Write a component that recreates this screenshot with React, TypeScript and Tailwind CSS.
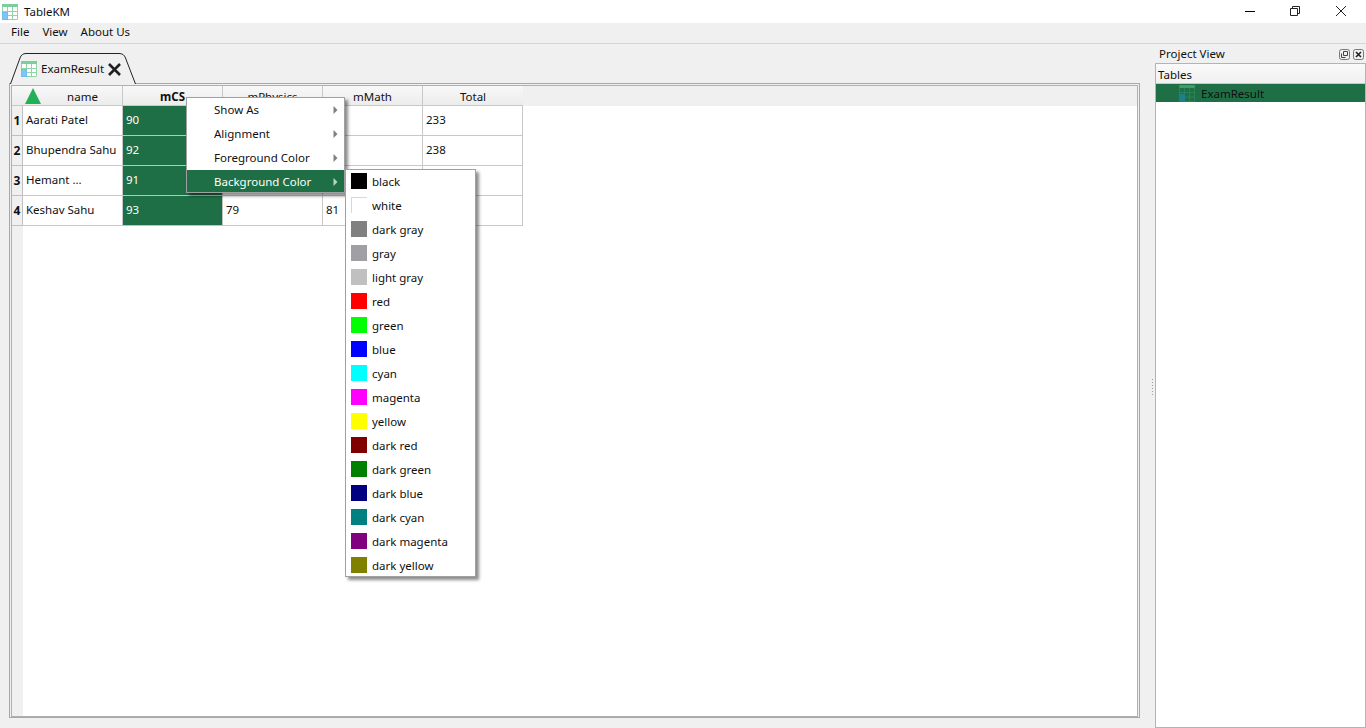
import React from "react";

const TableIcon = ({ className = "" }: { className?: string }) => (
  <svg viewBox="0 0 16 16" width="16" height="16" className={className}>
    <rect x="0" y="0" width="16" height="16" fill="#ffffff" />
    <rect x="0" y="0" width="16" height="3" fill="#7ccf9b" />
    <path d="M0.5 3V15.5H15.5V3M0 7.5H16M0 11.5H16M5.5 3V16M10.5 3V16" stroke="#8ed6a8" strokeWidth="1" fill="none" />
    <rect x="0" y="8" width="6" height="8" fill="#62b8ee" />
    <path d="M2 8V16M4 8V16M0 10H6M0 12H6M0 14H6" stroke="#9bd4f5" strokeWidth="0.6" />
  </svg>
);

const SelectedIcon = () => (
  <svg viewBox="0 0 16 18" width="16" height="18">
    <rect x="0" y="0" width="16" height="18" rx="1" fill="#1e6f45" />
    <rect x="0" y="1" width="16" height="3" rx="1" fill="#3f9d6c" />
    <path d="M0.5 4V17.5H15.5V4M0 8.5H16M0 13H16M5.5 4V18M10.5 4V18" stroke="#2b8257" strokeWidth="1" fill="none" />
    <rect x="0" y="10" width="6" height="8" fill="#1c7f8f" />
  </svg>
);

const Arrow = ({ active = false }: { active?: boolean }) => (
  <svg width="5" height="8" viewBox="0 0 5 8">
    <path d="M0.5 0L4.5 4L0.5 8Z" fill={active ? "#b9d4c6" : "#808080"} />
  </svg>
);

const cols = ["mCS", "mPhysics", "mMath", "Total"];
const rows = [
  ["Aarati Patel", "90", "71", "72", "233"],
  ["Bhupendra Sahu", "92", "73", "73", "238"],
  ["Hemant ...", "91", "70", "74", "235"],
  ["Keshav Sahu", "93", "79", "81", "253"],
];

const colors: [string, string][] = [
  ["black", "#000000"],
  ["white", "#ffffff"],
  ["dark gray", "#808080"],
  ["gray", "#a0a0a4"],
  ["light gray", "#c0c0c0"],
  ["red", "#ff0000"],
  ["green", "#00ff00"],
  ["blue", "#0000ff"],
  ["cyan", "#00ffff"],
  ["magenta", "#ff00ff"],
  ["yellow", "#ffff00"],
  ["dark red", "#800000"],
  ["dark green", "#008000"],
  ["dark blue", "#000080"],
  ["dark cyan", "#008080"],
  ["dark magenta", "#800080"],
  ["dark yellow", "#808000"],
];

const menu = ["Show As", "Alignment", "Foreground Color", "Background Color"];

export default function App() {
  return (
    <div className="relative flex h-[728px] w-[1366px] flex-col overflow-hidden bg-[#f0f0f0] font-['Noto_Sans','Open_Sans',sans-serif] text-[11.5px] text-[#101010]">
      {/* title bar */}
      <div className="flex h-[23px] items-center bg-white">
        <TableIcon className="ml-[2px]" />
        <span className="ml-[6px] flex-1 leading-[23px]">TableKM</span>
        <div className="mr-[19px] flex items-center gap-[33px] pb-[2px]">
          <svg width="12" height="12" viewBox="0 0 12 12"><path d="M1 6.5H11" stroke="#000" /></svg>
          <svg width="12" height="12" viewBox="0 0 12 12" fill="none"><path d="M1.5 3.5H8.5V10.5H1.5ZM3.5 3.5V1.5H10.5V8.5H8.5" stroke="#222" /></svg>
          <svg className="ml-px" width="12" height="12" viewBox="0 0 12 12" fill="none"><path d="M1 1L11 11M11 1L1 11" stroke="#222" /></svg>
        </div>
      </div>
      {/* menu bar */}
      <div className="flex h-[20px] items-center gap-[13px] pl-[11px] pb-[2px]">
        <span>File</span>
        <span>View</span>
        <span>About Us</span>
      </div>
      <div className="h-px bg-[#d4d4d4]" />
      {/* main */}
      <div className="flex flex-1">
        {/* tab area */}
        <div className="flex w-[1155px] flex-col pl-[9px] pr-[15px] pt-[9px] pb-[10px]">
          <div className="relative z-10 -mb-px ml-px flex h-[31px] w-[126px] items-center pl-[11px]">
            <svg className="absolute left-0 top-0" width="126" height="31" viewBox="0 0 126 31" fill="none">
              <path d="M0.5 31L10 5Q11.5 0.5 16 0.5H109Q114 0.5 115.5 5L125.5 31" fill="#f0f0f0" stroke="#222" />
            </svg>
            <TableIcon className="relative" />
            <span className="relative ml-[4px] w-[64px] pt-px">ExamResult</span>
            <svg className="relative ml-[3px] mt-px" width="13" height="13" viewBox="0 0 13 13">
              <path d="M1 1L12 12M12 1L1 12" stroke="#202020" strokeWidth="2.6" />
            </svg>
          </div>
          <div className="flex flex-1 flex-col border border-[#a8a8a8] pl-px pt-px pr-px">
            <div className="flex flex-1 flex-col border border-[#b0b0b0] bg-white">
              {/* header */}
              <div className="flex h-[20px]">
                <div className="flex h-[20px] w-[111px] items-center border-r border-b border-[#c8c8c8] bg-gradient-to-b from-[#f8f8f8] to-[#ececec] pl-[13px]">
                  <svg width="16" height="16" viewBox="0 0 16 16" className="shrink-0">
                    <path d="M8 0L16 16H0Z" fill="#22b058" />
                  </svg>
                  <span className="flex-1 pl-[2px] pt-[2px] text-center">name</span>
                </div>
                {cols.map((c, i) => (
                  <div
                    key={c}
                    className={`flex h-[20px] w-[100px] items-center justify-center border-b border-[#c8c8c8] bg-gradient-to-b from-[#f8f8f8] to-[#ececec] pt-[2px] ${i === 3 ? "" : "border-r"} ${i === 0 ? "font-bold" : ""}`}
                  >
                    {c}
                  </div>
                ))}
                <div className="h-[20px] flex-1 bg-[#f0f0f0]" />
              </div>
              {/* body */}
              <div className="flex flex-1">
                <div className="flex w-[11px] flex-col bg-[#f0f0f0]">
                  {rows.map((r, i) => (
                    <div key={i} className="flex h-[30px] items-center justify-center border-r border-b border-[#c0c0c0] text-[12px] font-bold">
                      {i + 1}
                    </div>
                  ))}
                </div>
                <div className="flex flex-col">
                  {rows.map((r, i) => (
                    <div key={i} className="flex h-[30px]">
                      {r.map((v, j) => (
                        <div
                          key={j}
                          className={`flex h-[30px] w-[100px] items-center border-r border-b pb-[2px] pl-[3px] ${j === 1 ? "border-[#c0c0c0] bg-[#1e6f45] text-white" : "border-[#c8c8c8] bg-white"}`}
                        >
                          {v}
                        </div>
                      ))}
                    </div>
                  ))}
                </div>
              </div>
            </div>
          </div>
        </div>
        {/* dock */}
        <div className="flex flex-1 flex-col pt-[1px]">
          <div className="flex h-[18px] items-center pl-[4px] pr-[2px]">
            <span className="flex-1">Project View</span>
            <svg width="11" height="11" viewBox="0 0 11 11" fill="none" className="mr-[3px]">
              <rect x="0.5" y="0.5" width="10" height="10" rx="2" stroke="#777" />
              <path d="M4.5 2.5H8.5V6.5H4.5ZM2.5 4.5V8.5H6.5" stroke="#444" />
            </svg>
            <svg width="11" height="11" viewBox="0 0 11 11" fill="none">
              <rect x="0.5" y="0.5" width="10" height="10" rx="2" stroke="#777" />
              <path d="M3 3L8 8M8 3L3 8" stroke="#222" strokeWidth="1.6" />
            </svg>
          </div>
          <div className="flex flex-1 flex-col border border-[#b4b4b4] bg-white">
            <div className="flex h-[20px] items-center border-b border-[#c8c8c8] bg-gradient-to-b from-[#fafafa] to-[#f0f0f0] pl-[2px] pt-[2px]">
              Tables
            </div>
            <div className="flex h-[18px] items-center bg-[#1e6f45] pl-[23px] text-[#101010]">
              <SelectedIcon />
              <span className="ml-[6px] pt-px">ExamResult</span>
            </div>
          </div>
        </div>
      </div>
      {/* splitter grip */}
      <div className="absolute left-[1152px] top-[379px] flex flex-col gap-[2px]">
        {[0, 1, 2, 3, 4, 5].map((i) => (
          <div key={i} className="h-px w-px bg-[#a0a0a0]" />
        ))}
      </div>
      {/* context menu */}
      <div className="absolute left-[186px] top-[97px] z-20 w-[159px] shadow-[3px_3px_3px_rgba(0,0,0,0.45)]">
        <div className="flex h-[96px] flex-col overflow-hidden border border-[#a0a0a0] bg-white">
          {menu.map((m, i) => (
            <div
              key={m}
              className={`flex h-[24px] shrink-0 items-center justify-between pl-[27px] pr-[6px] ${i === 3 ? "bg-[#1e6f45] text-white" : ""}`}
            >
              <span>{m}</span>
              <Arrow active={i === 3} />
            </div>
          ))}
        </div>
      </div>
      {/* submenu */}
      <div className="absolute left-[345px] top-[169px] z-30 w-[131px] shadow-[3px_3px_3px_rgba(0,0,0,0.45)]">
        <div className="flex h-[408px] flex-col overflow-hidden border border-[#a0a0a0] bg-white">
          {colors.map(([n, c]) => (
            <div key={n} className="flex h-[24px] shrink-0 items-center pl-[5px]">
              <div
                className={`-mt-[2px] h-[16px] w-[16px] ${n === "white" ? "border-t border-l border-[#d8d8d8]" : ""}`}
                style={{ backgroundColor: c }}
              />
              <span className="ml-[5px]">{n}</span>
            </div>
          ))}
        </div>
      </div>
    </div>
  );
}
